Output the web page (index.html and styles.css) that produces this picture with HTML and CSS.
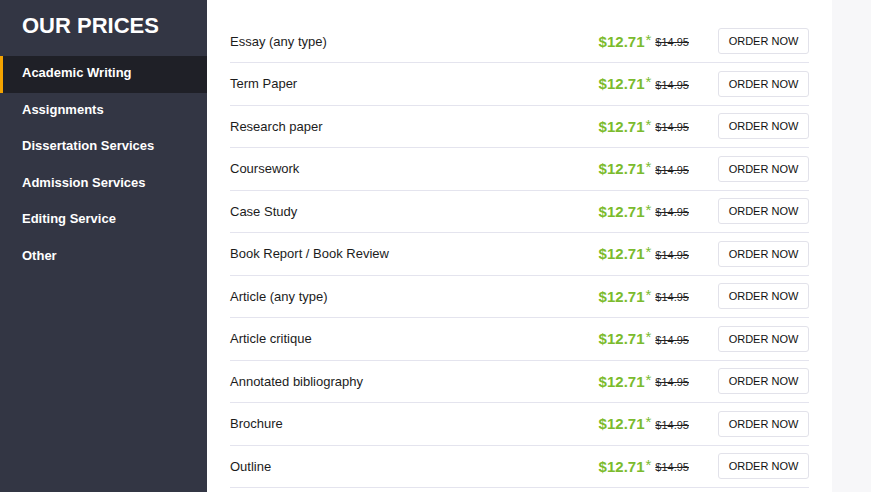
FILE: index.html
```html
<!DOCTYPE html>
<html lang="en">
<head>
    <meta charset="UTF-8">
    <meta name="viewport" content="width=device-width, initial-scale=1.0">
    <title>Our Prices</title>
    <link rel="stylesheet" href="styles.css">
</head>
<body>
    <div class="page">
        <aside class="sidebar">
            <h1 class="sidebar-title">OUR PRICES</h1>
            <nav class="nav">
                <a class="nav-item active" href="#">Academic Writing</a>
                <a class="nav-item" href="#">Assignments</a>
                <a class="nav-item" href="#">Dissertation Services</a>
                <a class="nav-item" href="#">Admission Services</a>
                <a class="nav-item" href="#">Editing Service</a>
                <a class="nav-item" href="#">Other</a>
            </nav>
        </aside>

        <main class="prices">
            <div class="price-row">
                <span class="price-name">Essay (any type)</span>
                <span class="price-new">$12.71<sup>*</sup></span>
                <span class="price-old">$14.95</span>
                <button class="btn-order">ORDER NOW</button>
            </div>
            <div class="price-row">
                <span class="price-name">Term Paper</span>
                <span class="price-new">$12.71<sup>*</sup></span>
                <span class="price-old">$14.95</span>
                <button class="btn-order">ORDER NOW</button>
            </div>
            <div class="price-row">
                <span class="price-name">Research paper</span>
                <span class="price-new">$12.71<sup>*</sup></span>
                <span class="price-old">$14.95</span>
                <button class="btn-order">ORDER NOW</button>
            </div>
            <div class="price-row">
                <span class="price-name">Coursework</span>
                <span class="price-new">$12.71<sup>*</sup></span>
                <span class="price-old">$14.95</span>
                <button class="btn-order">ORDER NOW</button>
            </div>
            <div class="price-row">
                <span class="price-name">Case Study</span>
                <span class="price-new">$12.71<sup>*</sup></span>
                <span class="price-old">$14.95</span>
                <button class="btn-order">ORDER NOW</button>
            </div>
            <div class="price-row">
                <span class="price-name">Book Report / Book Review</span>
                <span class="price-new">$12.71<sup>*</sup></span>
                <span class="price-old">$14.95</span>
                <button class="btn-order">ORDER NOW</button>
            </div>
            <div class="price-row">
                <span class="price-name">Article (any type)</span>
                <span class="price-new">$12.71<sup>*</sup></span>
                <span class="price-old">$14.95</span>
                <button class="btn-order">ORDER NOW</button>
            </div>
            <div class="price-row">
                <span class="price-name">Article critique</span>
                <span class="price-new">$12.71<sup>*</sup></span>
                <span class="price-old">$14.95</span>
                <button class="btn-order">ORDER NOW</button>
            </div>
            <div class="price-row">
                <span class="price-name">Annotated bibliography</span>
                <span class="price-new">$12.71<sup>*</sup></span>
                <span class="price-old">$14.95</span>
                <button class="btn-order">ORDER NOW</button>
            </div>
            <div class="price-row">
                <span class="price-name">Brochure</span>
                <span class="price-new">$12.71<sup>*</sup></span>
                <span class="price-old">$14.95</span>
                <button class="btn-order">ORDER NOW</button>
            </div>
            <div class="price-row">
                <span class="price-name">Outline</span>
                <span class="price-new">$12.71<sup>*</sup></span>
                <span class="price-old">$14.95</span>
                <button class="btn-order">ORDER NOW</button>
            </div>
        </main>

        <div class="aside-gap"></div>
    </div>
</body>
</html>
```

FILE: styles.css
```css
* {
    box-sizing: border-box;
    font-family: 'Liberation Sans', Arial, sans-serif;
}
body {
    margin: 0;
    background: #f7f7f9;
    overflow: hidden;
}

.page {
    display: flex; height: 492px;
}

/* left menu */
.sidebar {
    width: 207px; flex-shrink: 0; background: #333644; color: #fff;
}
.sidebar-title {
    margin: 0; height: 56px; padding: 12px 0 0 22px;
    font-size: 22px; font-weight: 700; line-height: 28px;
}
.nav { display: flex; flex-direction: column; }
.nav-item {
    display: block; height: 36.5px; line-height: 34px; padding-left: 22px;
    color: #fff; text-decoration: none; font-size: 13px; font-weight: 700;
}
.nav-item.active {
    background: #1f2027; border-left: 3px solid #f4a300; padding-left: 19px;
}

/* price table */
.prices {
    width: 625px; flex-shrink: 0; background: #fff; padding: 20.5px 23px 0;
}
.price-row {
    display: flex; align-items: center; height: 42.5px;
    border-bottom: 1px solid #e4e4ee;
}
.price-name { flex: 1; font-size: 13px; color: #1c1c1c; }
.price-new {
    color: #7bbb2d; font-size: 15px; font-weight: 700;
}
.price-new sup {
    font-size: 15px; font-weight: 400; vertical-align: 2px; margin-left: 1px;
    line-height: 0;
}
.price-old {
    margin-left: 4px; font-size: 11px; color: #222; text-decoration: line-through;
    position: relative; top: 1px;
}
.btn-order {
    margin-left: 29px; width: 91px; height: 26px; padding: 0;
    background: #fff; border: 1px solid #e2e2ea; border-radius: 3px;
    font-size: 11px; color: #111; cursor: pointer;
}

.aside-gap { flex: 1; background: #f7f7f9; }
```
